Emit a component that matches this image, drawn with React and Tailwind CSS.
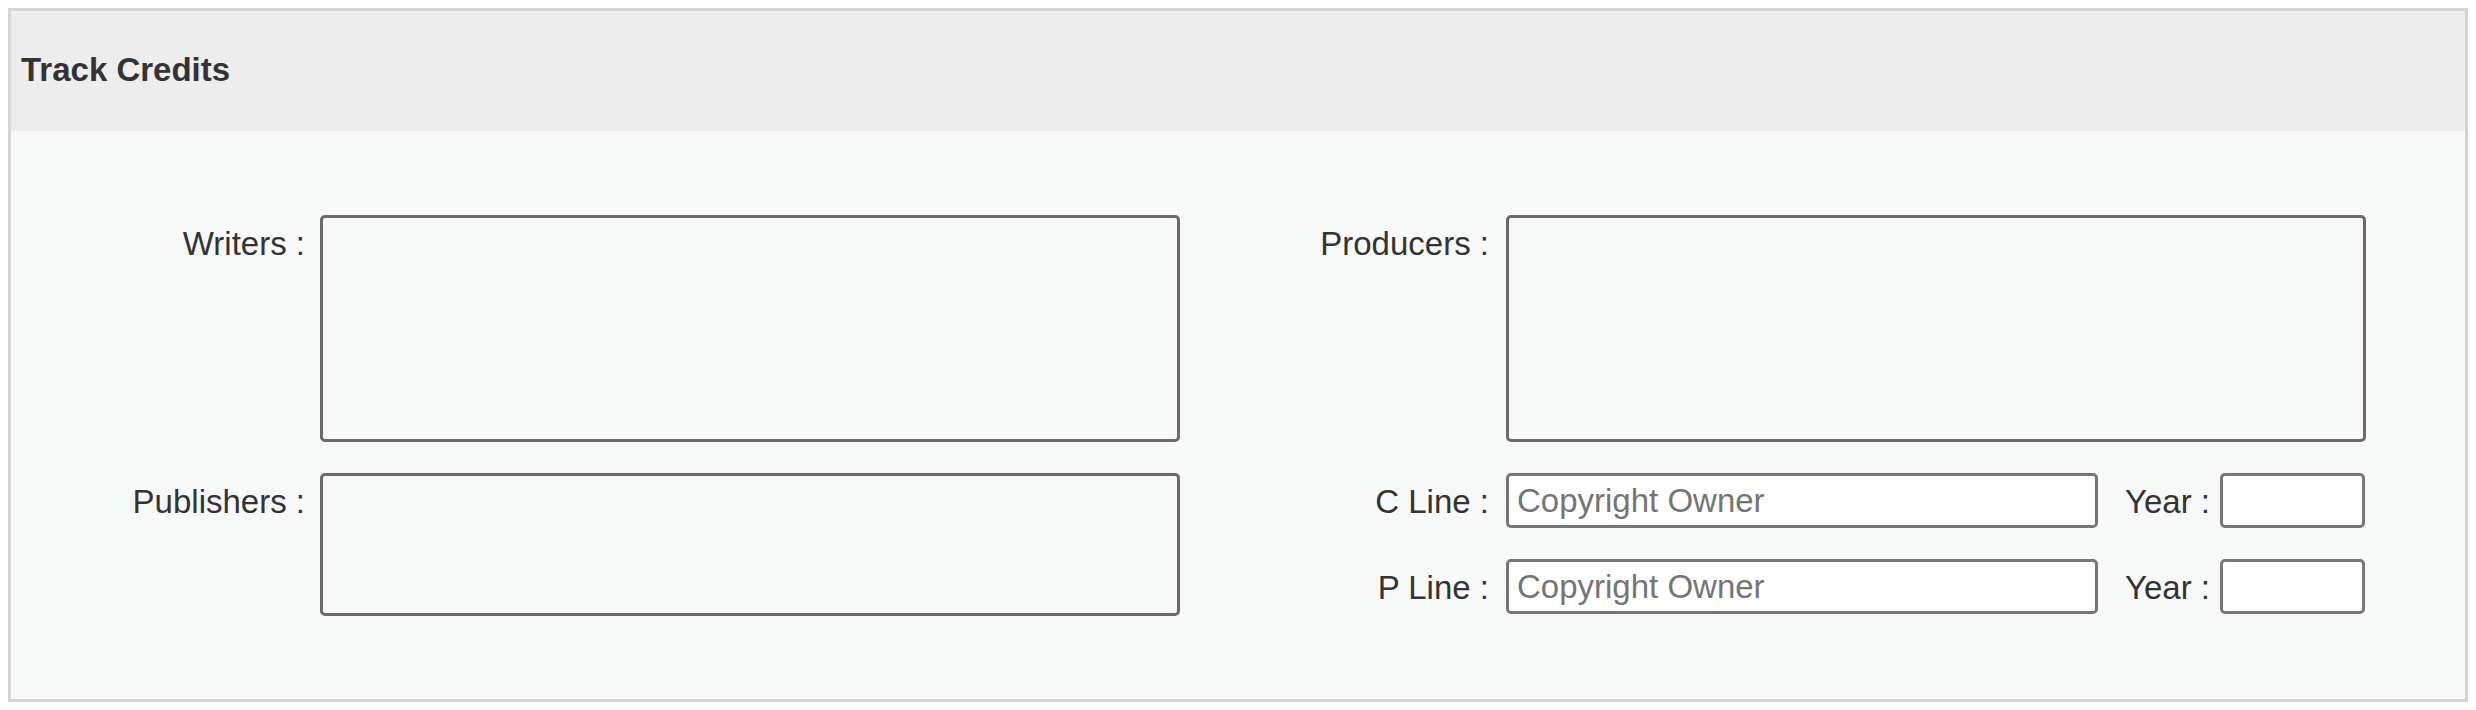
import React from 'react';

const font = "font-['Liberation_Sans',Arial,sans-serif]";

const Label = ({ children, className = '' }) => (
  <label className={`h-[55px] pt-[1px] flex items-center justify-end shrink-0 text-[33px] text-[#333] leading-none whitespace-nowrap ${className}`}>
    {children}
  </label>
);

const Area = ({ className = '' }) => (
  <textarea
    className={`shrink-0 bg-transparent border-[3px] border-[#6a6a6a] rounded-[5px] outline-none resize-none ${className}`}
  />
);

const Line = ({ label }) => (
  <div className="flex items-center">
    <Label className="w-[309px]">{label}</Label>
    <input
      type="text"
      placeholder="Copyright Owner"
      className={`ml-[17px] w-[592px] h-[55px] bg-white border-[3px] border-[#767676] rounded-[5px] px-[8px] text-[33px] text-[#333] placeholder:text-[#757575] outline-none ${font}`}
    />
    <Label className="ml-[27px]">Year :</Label>
    <input
      type="text"
      className={`ml-[10px] w-[145px] h-[55px] bg-white border-[3px] border-[#767676] rounded-[5px] px-2 text-[33px] outline-none ${font}`}
    />
  </div>
);

export default function App() {
  return (
    <div className={`w-full h-[710px] p-2 bg-white ${font}`}>
      <div className="border-[3px] border-[#d4d4d4] bg-[#f7f9f8]">
        {/* Header */}
        <div className="h-[120px] bg-[#ededed] flex items-center px-[10px] pb-[3px]">
          <h3 className="text-[33px] font-bold text-[#333] leading-none">Track Credits</h3>
        </div>

        {/* Body */}
        <div className="pt-[84px] pb-[83px] flex flex-col gap-[31px]">
          <div className="flex items-start">
            <Label className="w-[294px]">Writers :</Label>
            <Area className="ml-[15px] w-[860px] h-[227px]" />
            <Label className="w-[309px]">Producers :</Label>
            <Area className="ml-[17px] w-[860px] h-[227px]" />
          </div>

          <div className="flex items-start">
            <Label className="w-[294px]">Publishers :</Label>
            <Area className="ml-[15px] w-[860px] h-[143px]" />
            <div className="flex flex-col gap-[31px]">
              <Line label="C Line :" />
              <Line label="P Line :" />
            </div>
          </div>
        </div>
      </div>
    </div>
  );
}
